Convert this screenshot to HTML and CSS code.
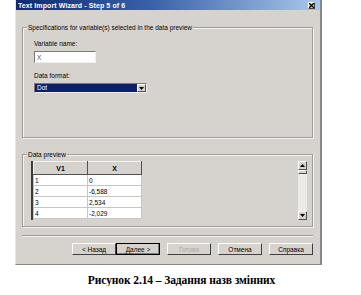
FILE: index.html
```html
<!DOCTYPE html>
<html lang="ru">
<head>
    <meta charset="UTF-8">
    <title>Text Import Wizard - Step 5 of 6</title>
    <link rel="stylesheet" href="styles.css">
</head>
<body>
    <div class="window">
        <!-- Title bar -->
        <div class="titlebar">
            <span class="title">Text Import Wizard - Step 5 of 6</span>
            <span class="close">
                <svg width="5" height="5" viewBox="0 0 5 5"><path d="M0 0L5 5M5 0L0 5" stroke="#000" stroke-width="1.3"/></svg>
            </span>
        </div>

        <div class="content">
            <!-- Specifications group -->
            <div class="group spec">
                <span class="group-label">Specifications for variable(s) selected in the data preview</span>
                <div class="field-label">Variable name:</div>
                <div class="textbox">X</div>
                <div class="field-label">Data format:</div>
                <div class="combo">
                    <span class="combo-value">Dot</span>
                    <span class="combo-btn">
                        <svg width="5" height="3" viewBox="0 0 5 3"><path d="M0 0H5L2.5 3Z" fill="#000"/></svg>
                    </span>
                </div>
            </div>

            <!-- Data preview group -->
            <div class="group preview">
                <span class="group-label">Data preview</span>
                <div class="grid">
                    <table class="cells">
                        <tr><th>V1</th><th>X</th></tr>
                        <tr><td>1</td><td>0</td></tr>
                        <tr><td>2</td><td>-6,588</td></tr>
                        <tr><td>3</td><td>2,534</td></tr>
                        <tr><td>4</td><td>-2,029</td></tr>
                    </table>
                    <div class="scrollbar">
                        <span class="sb-btn">
                            <svg width="5" height="3" viewBox="0 0 5 3"><path d="M2.5 0L5 3H0Z" fill="#000"/></svg>
                        </span>
                        <span class="sb-thumb"></span>
                        <span class="sb-track"></span>
                        <span class="sb-btn">
                            <svg width="5" height="3" viewBox="0 0 5 3"><path d="M0 0H5L2.5 3Z" fill="#000"/></svg>
                        </span>
                    </div>
                </div>
            </div>

            <div class="separator"></div>

            <!-- Wizard buttons -->
            <div class="buttons">
                <button class="btn">&lt; Назад</button>
                <button class="btn default">Далее &gt;</button>
                <button class="btn disabled gap">Готово</button>
                <button class="btn gap">Отмена</button>
                <button class="btn gap">Справка</button>
            </div>
        </div>
    </div>

    <p class="caption">Рисунок 2.14 – Задання назв змінних</p>
</body>
</html>
```

FILE: styles.css
```css
body {
    margin: 0;
    background: #fff;
    font-family: 'Liberation Sans', Arial, sans-serif;
    font-size: 6.5px;
    color: #000;
}
.window {
    margin-left: 15px;
    width: 307px;
    height: 265px;
    box-sizing: border-box;
    background: #d6d3ce;
    border-left: 1px solid #e6e4e0;
    border-right: 2px solid #8a8884;
    border-bottom: 1px solid #8a8884;
}
.titlebar {
    height: 10px;
    display: flex;
    align-items: center;
    justify-content: space-between;
    padding: 0 5px 0 2px;
    background: linear-gradient(to right, #0f2a70, #3a62a8 45%, #a9c8ec);
}
.title {
    color: #fff;
    font-weight: bold;
    font-size: 7px;
    letter-spacing: 0.1px;
}
.close {
    width: 7px;
    height: 7px;
    box-sizing: border-box;
    background: #d6d3ce;
    border: 1px solid;
    border-color: #fff #404040 #404040 #fff;
    display: flex;
    align-items: center;
    justify-content: center;
}
.close svg {
    display: block;
}
.content {
    padding: 17px 7px 0 6px;
}
.group {
    position: relative;
    box-sizing: border-box;
    border: 1px solid #a09e9a;
    box-shadow: 1px 1px 0 #f4f3f1, inset 1px 1px 0 #f4f3f1;
}
.group-label {
    position: absolute;
    top: -5px;
    left: 4px;
    padding: 0 1px;
    background: #d6d3ce;
    line-height: 9px;
    white-space: nowrap;
}
.spec {
    height: 111px;
    padding: 12px 0 0 11px;
}
.field-label {
    line-height: 8px;
}
.textbox {
    width: 62px;
    height: 12px;
    box-sizing: border-box;
    margin: 3px 0 9px;
    padding: 1px 2px;
    background: #fff;
    border: 1px solid;
    border-color: #7a7874 #f0efed #f0efed #7a7874;
    line-height: 9px;
    color: #555;
}
.combo {
    display: flex;
    width: 113px;
    height: 10px;
    box-sizing: border-box;
    margin-top: 3px;
    border: 1px solid;
    border-color: #7a7874 #f0efed #f0efed #7a7874;
    background: #0c1f6b;
}
.combo-value {
    flex: 1;
    padding-left: 2px;
    color: #fff;
    line-height: 8px;
}
.combo-btn {
    width: 9px;
    box-sizing: border-box;
    background: #d6d3ce;
    border: 1px solid;
    border-color: #fff #505050 #505050 #fff;
    display: flex;
    align-items: center;
    justify-content: center;
}
.preview {
    height: 73px;
    margin-top: 16px;
    padding: 6px 5px 0 8px;
}
.grid {
    display: flex;
    justify-content: space-between;
    height: 59px;
    border-left: 2px solid #3c3c3c;
}
.cells {
    border-collapse: collapse;
    align-self: flex-start;
}
.cells th {
    width: 54px;
    height: 13px;
    box-sizing: border-box;
    padding: 0;
    font-size: 7px;
    background: #d6d3ce;
    border: 1px solid;
    border-color: #f4f3f1 #505050 #505050 #f4f3f1;
}
.cells td {
    height: 11px;
    box-sizing: border-box;
    padding: 0 0 0 1px;
    background: #fff;
    border: 1px solid #c8c6c2;
    line-height: 9px;
}
.scrollbar {
    display: flex;
    flex-direction: column;
    width: 9px;
    background: #ecebe8;
}
.sb-btn,
.sb-thumb {
    box-sizing: border-box;
    background: #d6d3ce;
    border: 1px solid;
    border-color: #fff #505050 #505050 #fff;
}
.sb-btn {
    height: 9px;
    display: flex;
    align-items: center;
    justify-content: center;
}
.sb-thumb {
    height: 4px;
}
.sb-track {
    flex: 1;
}
.separator {
    height: 2px;
    margin-top: 8px;
    border-top: 1px solid #a09e9a;
    border-bottom: 1px solid #f4f3f1;
    box-sizing: border-box;
}
.buttons {
    display: flex;
    justify-content: flex-end;
    margin-top: 6px;
}
.btn {
    width: 44px;
    height: 12px;
    box-sizing: border-box;
    padding: 0;
    font-family: 'Liberation Sans', Arial, sans-serif;
    font-size: 6.5px;
    color: #000;
    background: #d6d3ce;
    border: 1px solid;
    border-color: #fff #404040 #404040 #fff;
}
.btn.default {
    outline: 1px solid #000;
    outline-offset: -1px;
    box-shadow: inset -1px -1px 0 #808080;
    border-color: #000;
}
.btn.disabled {
    color: #a8a6a2;
}
.btn.gap {
    margin-left: 7px;
}
.caption {
    margin: 9px 0 0;
    padding-left: 2px;
    text-align: center;
    font-family: 'Liberation Serif', 'Times New Roman', serif;
    font-weight: bold;
    font-size: 11.5px;
    letter-spacing: -0.1px;
}
```
